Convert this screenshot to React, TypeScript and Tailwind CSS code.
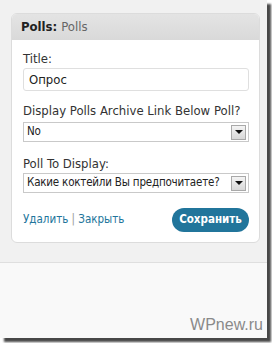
import React from 'react'

const font = { fontFamily: '"DejaVu Sans Condensed", "DejaVu Sans", Verdana, sans-serif' }

function SelectBox({ value }: { value: string }) {
  return (
    <div className="flex items-center h-[20px] bg-white border border-[#c9c9c9] pl-[3px] pr-[2px]">
      <span className="flex-1 text-[11.5px] text-[#222] whitespace-nowrap tracking-[-0.2px]">{value}</span>
      <div className="w-[15px] h-[15px] flex items-center justify-center bg-gradient-to-b from-[#f4f4f4] to-[#d8d8d8] border border-[#a9a9a9]">
        <div className="w-0 h-0 border-l-[4px] border-r-[4px] border-t-[4px] border-l-transparent border-r-transparent border-t-[#111]" />
      </div>
    </div>
  )
}

export default function App() {
  return (
    <div className="w-[272px] h-[343px] bg-white" style={font}>
      <div className="w-[267px] h-[338px] flex flex-col shadow-[4px_4px_2px_rgba(40,40,40,0.85)]">
        {/* widget area */}
        <div className="h-[262px] bg-[#f1f1f1] pt-[13px] pl-[11px] pr-[7px]">
          <div className="w-[249px] rounded-[6px] border border-[#dcdcdc] bg-white overflow-hidden">
            <div className="h-[26px] flex items-center px-[9px] bg-gradient-to-b from-[#e4e4e4] to-[#d9d9d9] text-[13px]">
              <span className="font-bold text-[#222]">Polls:</span>
              <span className="ml-[4px] text-[#666]">Polls</span>
            </div>
            <div className="pt-[11px] pb-[10px] pl-[11px] pr-[10px]">
              <div className="text-[13px] text-[#333] leading-[16px]">Title:</div>
              <div className="mt-[1px] h-[23px] flex items-center px-[5px] rounded-[3px] border border-[#dfdfdf] bg-white text-[13px] text-[#222]">
                Опрос
              </div>
              <div className="mt-[12px] text-[13px] text-[#333] leading-[16px] whitespace-nowrap">
                Display Polls Archive Link Below Poll?
              </div>
              <div className="mt-[3px]">
                <SelectBox value="No" />
              </div>
              <div className="mt-[14px] text-[13px] text-[#333] leading-[16px]">Poll To Display:</div>
              <div className="mt-[1px]">
                <SelectBox value="Какие коктейли Вы предпочитаете?" />
              </div>
              <div className="mt-[15px] flex items-center justify-between">
                <div className="text-[11.5px] text-[#21759b]">
                  Удалить <span className="text-[#999]">|</span> Закрыть
                </div>
                <button className="h-[24px] w-[77px] rounded-full bg-[#21759b] text-white text-[11.5px] font-bold">
                  Сохранить
                </button>
              </div>
            </div>
          </div>
        </div>
        {/* lower area */}
        <div className="flex-1 border-t border-[#dfdfdf] bg-[#f9f9f9] flex items-end justify-end pr-[4px] pb-[1px]">
          <span className="text-[16px] text-[#8a8a8a]" style={{ fontFamily: '"Liberation Sans", Arial, sans-serif' }}>
            WPnew.ru
          </span>
        </div>
      </div>
    </div>
  )
}
